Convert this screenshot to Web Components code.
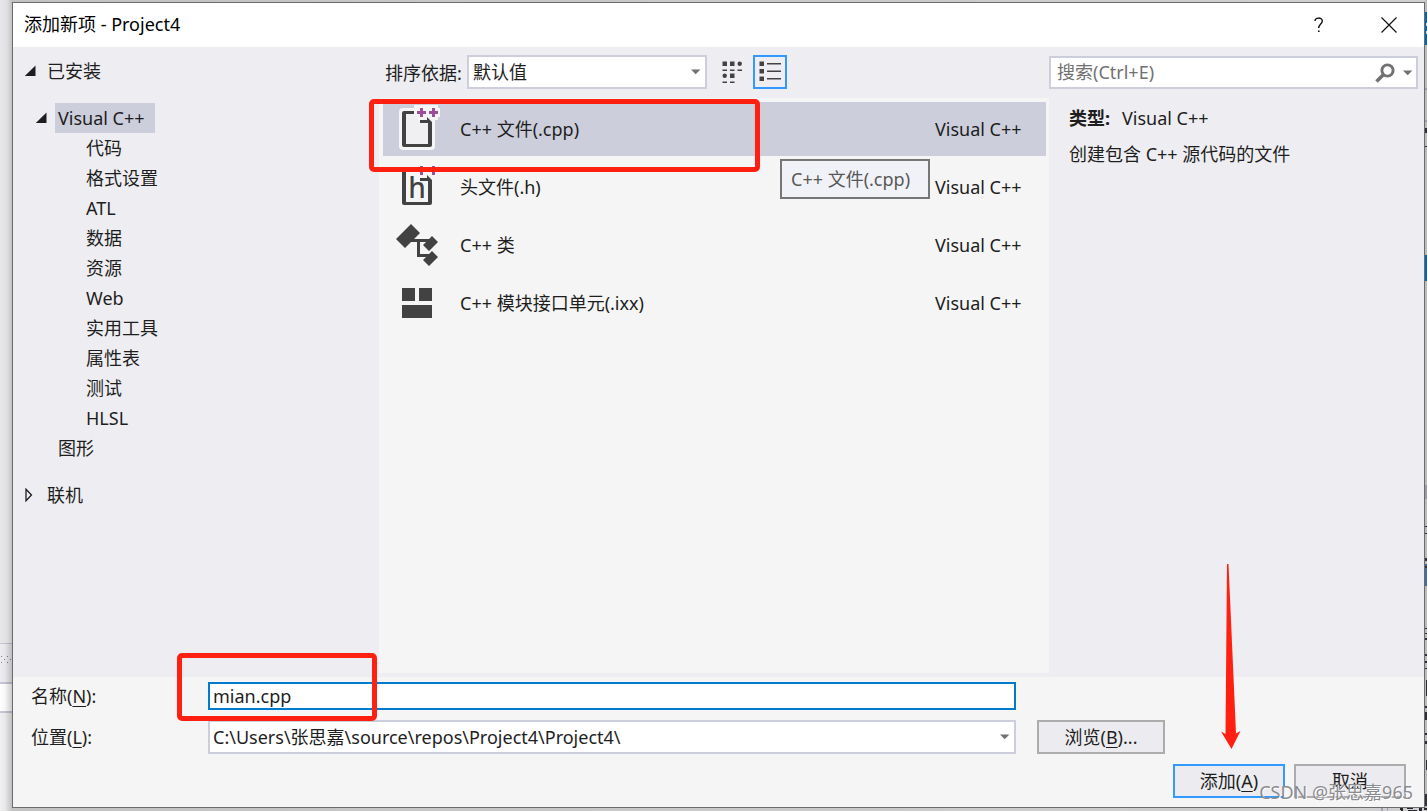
<!DOCTYPE html>
<html lang="zh-CN">
<head>
<meta charset="utf-8">
<title>添加新项 - Project4</title>
<style>
  body {
    margin: 0;
    font: 18px/30px "Noto Sans", "Noto Sans CJK SC", sans-serif;
    color: #1e1e1e;
  }
</style>
</head>
<body>
<vs-desktop>
  <vs-dialog heading="添加新项 - Project4">
    <vs-tree slot="nav">
      <vs-tree-item level="0" state="open">已安装</vs-tree-item>
      <vs-tree-item level="1" state="open" selected class="first">Visual C++</vs-tree-item>
      <vs-tree-item level="2">代码</vs-tree-item>
      <vs-tree-item level="2">格式设置</vs-tree-item>
      <vs-tree-item level="2">ATL</vs-tree-item>
      <vs-tree-item level="2">数据</vs-tree-item>
      <vs-tree-item level="2">资源</vs-tree-item>
      <vs-tree-item level="2">Web</vs-tree-item>
      <vs-tree-item level="2">实用工具</vs-tree-item>
      <vs-tree-item level="2">属性表</vs-tree-item>
      <vs-tree-item level="2">测试</vs-tree-item>
      <vs-tree-item level="2">HLSL</vs-tree-item>
      <vs-tree-item level="1">图形</vs-tree-item>
      <vs-tree-item level="0" state="closed" class="first">联机</vs-tree-item>
    </vs-tree>
    <vs-toolbar slot="main"></vs-toolbar>
    <vs-template-list slot="main">
      <vs-template icon="cpp" kind="Visual C++" selected>C++ 文件(.cpp)</vs-template>
      <vs-template icon="header" kind="Visual C++">头文件(.h)</vs-template>
      <vs-template icon="class" kind="Visual C++">C++ 类</vs-template>
      <vs-template icon="module" kind="Visual C++">C++ 模块接口单元(.ixx)</vs-template>
      <vs-tooltip slot="overlay">C++ 文件(.cpp)</vs-tooltip>
    </vs-template-list>
    <vs-details slot="side" kind="Visual C++">创建包含 C++ 源代码的文件</vs-details>
    <vs-item-form slot="footer"></vs-item-form>
  </vs-dialog>
</vs-desktop>

<script>
const define = (name, html, setup) => {
  const template = document.createElement('template');
  template.innerHTML = html;
  customElements.define(name, class extends HTMLElement {
    constructor() {
      super();
      this.attachShadow({ mode: 'open' }).append(template.content.cloneNode(true));
    }
    connectedCallback() { if (setup) setup(this, this.shadowRoot); }
  });
};

const controls = `
  *, *::before, *::after { box-sizing: border-box; }
  svg { display: block; }
  input, select, button { font: inherit; color: inherit; margin: 0; border-radius: 0; outline: none; }
  input, select { background: #fff; border: 2px solid #cccedb; padding: 0 4px; width: 100%; min-width: 0; appearance: none; }
  .combo { display: grid; grid-template-columns: minmax(0, 1fr) 16px; align-items: center; }
  .combo > select { grid-area: 1 / 1 / 2 / 3; height: 34px; }
  .combo > svg { grid-area: 1 / 2; pointer-events: none; }
`;
const caret = `<svg width="10" height="6" viewBox="0 0 10 6" aria-hidden="true"><path d="M0 .5H9.400L4.700 5.300Z" fill="#717171"/></svg>`;

/* The editor windows that stay visible round the dialog's edges. */
define('vs-desktop', `
  <style>
    :host {
      display: flex; box-sizing: border-box; min-height: 100vh; position: relative;
      padding: 2px 2px 3px 12px; overflow: hidden;
      background: linear-gradient(90deg, #e8e8ec 0, #e0e0e3 7px, #c2c2c5 12px, #d0d0d3 100%);
    }
    .left { position: absolute; left: 0; top: 643px; width: 12px; height: 168px; }
    .right { position: absolute; right: 0; top: 0; width: 2px; height: 811px; }
    .bottom { position: absolute; right: 0; bottom: 0; width: 60px; height: 3px; }
    ::slotted(*) { flex: 1; position: relative; }
  </style>
  <svg class="left" viewBox="0 0 12 168" aria-hidden="true">
    <defs><linearGradient id="s"><stop offset="0" stop-opacity="0"/><stop offset=".4" stop-opacity=".03"/><stop offset="1" stop-opacity=".2"/></linearGradient></defs>
    <path d="M0 0H12V40H0z" fill="#eeeef2"/><path d="M0 40H12V68H0z" fill="#fff"/><path d="M0 70H12V168H0z" fill="#f0f0f2"/>
    <path d="M0 0H12V1H0zM0 39H12V41H0zM0 68H12V70H0z" fill="#c5c7d6"/>
    <path d="M1 13h1v1h-1zM1 19h1v1h-1zM4 16h1v1h-1zM7 13h1v1h-1zM7 19h1v1h-1zM10 16h1v1h-1z" fill="#808084"/>
    <path d="M0 0H12V168H0z" fill="url(#s)"/>
  </svg>
  <svg class="right" viewBox="0 0 2 811" aria-hidden="true">
    <path d="M0 0H2V811H0z" fill="#bcbcbc"/>
    <path d="M0 12H2V45H0zM0 255H2V281H0z" fill="#0068ad"/>
    <path d="M0 564H2V586H0z" fill="#4a6da0"/>
    <path d="M1 23h1v3h-1zM1 31h1v3h-1z" fill="#d0e4f2"/>
    <path d="M0 128H2V133H0zM0 146H2V147H0zM0 526H2V527H0zM0 533H2V534H0zM0 558H2V561H0zM0 566H2V568H0zM0 628H2V629H0zM0 633H2V634H0zM0 638H2V640H0zM0 654H2V656H0zM0 661H2V663H0zM0 668H2V669H0zM1 680H2V696H1zM0 706H2V708H0zM0 712H2V720H0zM0 733H2V735H0zM0 741H2V744H0zM1 760H2V770H1zM0 794H2V806H0z" fill="#303038"/>
    <path d="M0 88H2V90H0zM0 120H2V122H0zM0 485H2V499H0z" fill="#9c9ca4"/>
  </svg>
  <svg class="bottom" viewBox="0 0 60 3" aria-hidden="true">
    <path d="M14 0h2v3h-2zM20 0h1v3h-1z" fill="#a0a1ae"/>
    <path d="M33 0h3v3h-2v-1h-1zM40 0h6v1h-6zM41 2h9v1h-9zM52 0h3v3h-3zM57 0h3v2h-3z" fill="#28282c"/>
  </svg>
  <slot></slot>
`);

define('vs-dialog', `
  <style>${controls}
    :host { display: flex; flex-direction: column; box-sizing: border-box; min-width: 0; border: 1px solid #6b6b6b; background: #eeeef2; }
    header { display: flex; align-items: flex-start; height: 44px; padding-left: 11px; background: #fff; color: #000; }
    h1 { flex: 1; margin: 0; font-size: 18px; line-height: 42px; font-weight: 400; }
    header button { display: grid; place-items: center; width: 70px; height: 44px; border: 0; padding: 0; background: none; }
    .panes { flex: 1; display: grid; grid-template-columns: 366px minmax(0, 1fr) 375px; }
    .main { display: flex; flex-direction: column; padding-bottom: 4px; min-width: 0; }
    .main ::slotted(vs-template-list) { flex: 1; }
  </style>
  <header>
    <h1></h1>
    <button aria-label="帮助"><svg width="10" height="16" viewBox="0 0 10 16" fill="none" stroke="#111" stroke-width="1.400"><path d="M1 4C1 .2 8.300 0 8.300 4C8.300 7 4.700 7 4.700 11"/><path d="M4 13.500h1.600v1.600H4z" fill="#111" stroke="none"/></svg></button>
    <button aria-label="关闭"><svg width="16" height="16" viewBox="0 0 16 16" fill="none" stroke="#111" stroke-width="1.200"><path d="M.5 .5L15.500 15.500M15.500 .5L.5 15.500"/></svg></button>
  </header>
  <div class="panes">
    <slot name="nav"></slot>
    <div class="main"><slot name="main"></slot></div>
    <slot name="side"></slot>
  </div>
  <slot name="footer"></slot>
`, (host, root) => { root.querySelector('h1').textContent = host.getAttribute('heading'); });

define('vs-tree', `
  <style>
    :host { display: block; padding-top: 9px; }
    ::slotted(.first) { margin-top: 17px; }
  </style>
  <slot></slot>
`, host => host.setAttribute('role', 'tree'));

define('vs-tree-item', `
  <style>
    :host { display: flex; align-items: center; gap: 8px; height: 30px; padding-left: 11px; }
    :host([level="1"]) { padding-left: 22px; }
    :host([level="2"]) { padding-left: 50px; }
    svg { width: 12px; height: 14px; }
    path { display: none; }
    :host([state="open"]) .open, :host([state="closed"]) .closed { display: block; }
    span { padding: 0 10px 0 3px; }
    :host([selected]) span { background: #cccedb; }
  </style>
  <svg viewBox="0 0 12 14" aria-hidden="true">
    <path class="open" d="M11.500 1.500V12H.8Z" fill="#1e1e1e"/>
    <path class="closed" d="M2 1.200L7.500 7L2 12.800Z" fill="none" stroke="#1e1e1e" stroke-width="1.300"/>
  </svg>
  <span><slot></slot></span>
`, host => host.setAttribute('role', 'treeitem'));

define('vs-toolbar', `
  <style>${controls}
    :host { display: flex; align-items: flex-start; height: 51px; box-sizing: border-box; padding: 8px 0 0 6px; }
    label { width: 82px; line-height: 36px; white-space: nowrap; }
    .combo { width: 240px; margin-right: 8px; }
    button { width: 34px; height: 34px; padding: 0; border: 2px solid transparent; background: none; margin-right: 4px; }
    button[aria-pressed="true"] { border-color: #3399ff; }
  </style>
  <label for="sort">排序依据:</label>
  <div class="combo"><select id="sort"><option>默认值</option></select>${caret}</div>
  <button aria-label="中等图标" aria-pressed="false"><svg width="30" height="30" viewBox="0 0 30 30" fill="#424242">
    <path d="M5.500 4.500H10V9H5.500zM13 4.500H17.500V9H13zM13 16.500H17.500V21H13zM5.500 12.500H10V14H5.500zM13 12.500H17.500V14H13zM20.500 12.500H25V14H20.500zM5.500 24.500H10V26H5.500zM13 24.500H17.500V26H13z"/>
    <circle cx="22.700" cy="6.800" r="2.200"/><circle cx="7.700" cy="18.700" r="2.200"/></svg></button>
  <button aria-label="小图标" aria-pressed="true"><svg width="30" height="30" viewBox="0 0 30 30" fill="#424242">
    <path d="M4.500 4.500H9V9H4.500zM4.500 12H9V16.500H4.500zM4.500 19.500H9V24H4.500zM12 6H26V7.500H12zM12 13.500H26V15H12zM12 21H26V22.500H12z"/></svg></button>
`);

define('vs-template-list', `
  <style>
    :host { display: flex; flex-direction: column; gap: 4px; box-sizing: border-box; padding: 4px 3px 4px 4px; background: #f5f5f5; position: relative; }
    .mark { position: absolute; box-sizing: border-box; left: -10px; top: 1px; width: 391px; height: 73px; border: 5px solid #ff2012; border-radius: 5px; pointer-events: none; }
  </style>
  <slot></slot>
  <slot name="overlay"></slot>
  <div class="mark"></div>
`, host => host.setAttribute('role', 'listbox'));

const plus = `<path d="M25 6h3v3h3v3h-3v3h-3v-3h-3v-3h3zM37 6h3v3h3v3h-3v3h-3v-3h-3v-3h3z" fill="#9b4f96"/>`;
const sheet = `<path d="M9 9H19V12H11V42H33V21H25V18H32V15L37 20V43Q37 45 35 45H9Q7 45 7 43V11Q7 9 9 9Z" fill="#424242"/>`;
const icons = {
  cpp: `<path d="M8 6H19V3H45V18H40V44Q40 48 36 48H8Q4 48 4 44V10Q4 6 8 6Z" fill="#f5f5f5"/><path d="M43 3h3v3h-3zM43 15h3v3h-3z" fill="#cccedb"/><path d="M11 12H21L24 20L33 22V42H11Z" fill="#f0eff1"/>${sheet}${plus}`,
  header: `${sheet}${plus}<text x="22" y="38" text-anchor="middle" font-size="28" font-weight="500" fill="#424242">h</text>`,
  class: `<path d="M15 21H36V24H25V36H34V39H22V24H15Z"/><path d="M16 6L25 15L10 30L1 21ZM37 18L43 24L34 33L28 27ZM37 33L43 39L34 48L28 42Z"/>`,
  module: `<path d="M7 12H20V25H7ZM24 12H37V25H24ZM7 29H37V42H7Z"/>`
};

define('vs-template', `
  <style>
    :host { display: grid; grid-template-columns: 48px minmax(0, 1fr) 111px; align-items: center; height: 54px; padding-left: 12px; }
    :host([selected]) { background: #cccedb; }
    svg { display: block; width: 48px; height: 54px; fill: #424242; }
    .name { padding-left: 17px; }
  </style>
  <svg viewBox="0 0 48 54" aria-hidden="true"></svg>
  <span class="name"><slot></slot></span>
  <span class="kind"></span>
`, (host, root) => {
  host.setAttribute('role', 'option');
  root.querySelector('svg').innerHTML = icons[host.getAttribute('icon')];
  root.querySelector('.kind').textContent = host.getAttribute('kind');
});

define('vs-tooltip', `
  <style>
    :host { position: absolute; right: 119px; top: 61px; width: 150px; height: 40px; box-sizing: border-box; padding-left: 9px;
      border: 2px solid #767676; background: #f1f2f7; color: #575757; line-height: 36px; white-space: nowrap; }
  </style>
  <slot></slot>
`, host => host.setAttribute('role', 'tooltip'));

define('vs-details', `
  <style>${controls}
    :host { display: block; padding: 9px 6px 0 0; }
    .search { display: grid; grid-template-columns: minmax(0, 1fr) 28px 15px; align-items: center; margin-bottom: 11px; }
    .search input { grid-area: 1 / 1 / 2 / 4; height: 33px; padding: 0 44px 1px 6px; }
    input::placeholder { color: #717171; opacity: 1; }
    .search .glass { grid-area: 1 / 2; }
    .search .glass + svg { grid-area: 1 / 3; }
    p { margin: 0 0 0 20px; line-height: 36px; }
    b { display: inline-block; width: 53px; }
  </style>
  <div class="search">
    <input type="text" placeholder="搜索(Ctrl+E)" aria-label="搜索">
    <svg class="glass" width="20" height="20" viewBox="0 0 20 20" fill="none" stroke="#717171" aria-hidden="true"><circle cx="12.500" cy="7.500" r="5.600" stroke-width="2.900"/><path d="M8.300 11.700L1.500 18.500" stroke-width="3.600"/></svg>
    ${caret}
  </div>
  <p><b>类型:</b><span class="kind"></span></p>
  <p><slot></slot></p>
`, (host, root) => { root.querySelector('.kind').textContent = host.getAttribute('kind'); });

define('vs-item-form', `
  <style>${controls}
    :host { display: block; position: relative; background: #f5f5f5; }
    form { display: grid; grid-template-columns: 177px minmax(0, 1fr) 149px 241px; grid-template-rows: 28px 34px 34px; row-gap: 10px;
      align-items: center; padding: 5px 18px 9px; }
    u { text-underline-offset: 3px; text-decoration-thickness: 1px; }
    #name { height: 28px; padding: 0 3px; border-color: #007acc; grid-column: 2; }
    .combo { grid-column: 2; }
    .combo select { padding: 0 3px; }
    button { height: 34px; padding: 0; background: #ececf0; border: 2px solid #acacac; }
    .browse { width: 128px; margin-left: 21px; }
    .actions { grid-column: 1 / 5; display: flex; justify-content: flex-end; gap: 9px; }
    .actions button { width: 112px; }
    .actions .add { border-color: #3399ff; }
    .mark { position: absolute; left: 164px; top: -24px; width: 200px; height: 68px; border: 5px solid #ff2012; border-radius: 5px; pointer-events: none; }
    .arrow { position: absolute; right: 183px; top: -114px; pointer-events: none; }
    .credit { position: absolute; right: 11px; bottom: 0; color: #8c8c90; text-shadow: 1px 1px 0 #fff; white-space: nowrap; pointer-events: none; }
  </style>
  <form>
    <label for="name">名称(<u>N</u>):</label>
    <input id="name" type="text" value="mian.cpp">
    <label for="place" style="grid-column: 1">位置(<u>L</u>):</label>
    <div class="combo"><select id="place"><option>C:\\Users\\张思嘉\\source\\repos\\Project4\\Project4\\</option></select>${caret}</div>
    <button type="button" class="browse">浏览(<u>B</u>)...</button>
    <div class="actions">
      <button type="button" class="add">添加(<u>A</u>)</button>
      <button type="button">取消</button>
    </div>
  </form>
  <div class="mark"></div>
  <svg class="arrow" width="20" height="186" viewBox="0 0 20 186" aria-hidden="true"><path d="M6 1H7.500L15 170.500L19.500 168L10.500 186L0 168.500L4.500 171Z" fill="#ff2012"/></svg>
  <span class="credit">CSDN @张思嘉965</span>
`);
</script>
</body>
</html>
